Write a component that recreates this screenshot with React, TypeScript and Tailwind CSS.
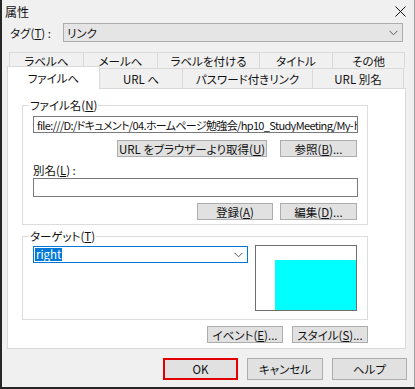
import React from "react";

function Key({ k }: { k: string }) {
  return (
    <>
      (<u>{k}</u>)
    </>
  );
}

function Button({ className = "", children }: { className?: string; children: React.ReactNode }) {
  return (
    <div
      className={`flex shrink-0 items-center justify-center border border-[#adadad] bg-[#e1e1e1] whitespace-nowrap ${className}`}
    >
      {children}
    </div>
  );
}

function Chevron() {
  return (
    <svg width="9" height="6" viewBox="0 0 9 6" className="shrink-0">
      <polyline points="0.5,0.8 4.5,4.8 8.5,0.8" fill="none" stroke="#5a5a5a" strokeWidth="1" />
    </svg>
  );
}

function GroupBox({
  label,
  className = "",
  children,
}: {
  label: React.ReactNode;
  className?: string;
  children: React.ReactNode;
}) {
  return (
    <div className={`relative ml-[14px] w-[346px] border border-[#dcdcdc] ${className}`}>
      <span className="absolute left-[6px] top-[-9px] bg-white px-[1px] leading-[16px]">{label}</span>
      {children}
    </div>
  );
}

const TOP_TABS = [
  { label: "ラベルへ", w: "w-[74px]" },
  { label: "メールへ", w: "w-[74px]" },
  { label: "ラベルを付ける", w: "w-[102px]" },
  { label: "タイトル", w: "w-[73px]" },
  { label: "その他", w: "w-[73px] border-r" },
];

const BOTTOM_TABS = [
  { label: "URL へ", w: "w-[82px]" },
  { label: "パスワード付きリンク", w: "w-[130px] border-l" },
  { label: "URL 別名", w: "w-[92px] border-l border-r" },
];

export default function App() {
  return (
    <div className="h-[389px] w-[415px] overflow-hidden border-b-2 border-l-2 border-r border-b-[#262626] border-l-[#262626] border-r-[#a0a0a0] bg-[#f0f0f0] font-['Noto_Sans_CJK_JP',sans-serif] text-[11.5px] leading-[16px] text-[#111] [font-feature-settings:'palt']">
      {/* title bar */}
      <div className="flex h-[23px] items-center justify-between pl-[3px] pr-[8px]">
        <span className="text-[12px]">属性</span>
        <svg width="11" height="11" viewBox="0 0 11 11">
          <path d="M0.5 0.5 L10.5 10.5 M10.5 0.5 L0.5 10.5" stroke="#111" strokeWidth="1" />
        </svg>
      </div>

      {/* tag row */}
      <div className="flex h-[19px] items-center pl-[8px]">
        <div className="w-[53px] shrink-0">
          タグ<Key k="T" /> :
        </div>
        <div className="flex h-[19px] w-[340px] items-center justify-between border border-[#adadad] bg-[#e5e5e5] pl-[3px] pr-[4px]">
          <span>リンク</span>
          <Chevron />
        </div>
      </div>

      {/* tabs */}
      <div className="ml-[7px] mt-[10px] flex h-[16px]">
        {TOP_TABS.map((t) => (
          <div
            key={t.label}
            className={`flex h-[16px] items-center justify-center border-l border-t border-[#d9d9d9] ${t.w}`}
          >
            {t.label}
          </div>
        ))}
      </div>
      <div className="ml-[5px] flex h-[20px] items-end">
        <div className="relative z-10 mb-[-1px] flex h-[23px] w-[93px] shrink-0 items-start justify-center border-l border-r border-t border-[#d9d9d9] bg-white pt-[3px]">
          ファイルへ
        </div>
        {BOTTOM_TABS.map((t) => (
          <div
            key={t.label}
            className={`flex h-[20px] shrink-0 items-center justify-center border-t border-[#d9d9d9] ${t.w}`}
          >
            {t.label}
          </div>
        ))}
      </div>

      {/* panel */}
      <div className="ml-[5px] flex h-[261px] w-[399px] flex-col border border-[#d9d9d9] bg-white">
        <GroupBox label={<>ファイル名<Key k="N" /></>} className="mt-[16px] h-[120px]">
          <div className="ml-[10px] mt-[10px] flex h-[17px] w-[325px] items-center overflow-hidden whitespace-nowrap border border-[#7a7a7a] pl-[3px] text-[11px] tracking-[-0.65px]">
            file:///D:/ドキュメント/04.ホームページ勉強会/hp10_StudyMeeting/My-ト
          </div>
          <div className="mt-[7px] flex justify-end gap-[13px] pr-[10px]">
            <Button className="h-[17px] w-[150px]">
              URL をブラウザーより取得<Key k="U" />
            </Button>
            <Button className="h-[17px] w-[77px]">
              参照<Key k="B" />...
            </Button>
          </div>
          <div className="ml-[10px] mt-[6px] h-[15px] leading-[15px]">
            別名<Key k="L" /> :
          </div>
          <div className="ml-[10px] h-[19px] w-[325px] border border-[#7a7a7a]" />
          <div className="mt-[6px] flex justify-end gap-[7px] pr-[10px]">
            <Button className="h-[17px] w-[76px]">
              登録<Key k="A" />
            </Button>
            <Button className="h-[17px] w-[77px]">
              編集<Key k="D" />...
            </Button>
          </div>
        </GroupBox>

        <GroupBox label={<>ターゲット<Key k="T" /></>} className="mt-[11px] h-[84px]">
          <div className="flex items-start pl-[10px]">
            <div className="mt-[9px] flex h-[17px] w-[215px] items-center justify-between border border-[#0078d7] pl-[1px] pr-[4px]">
              <span className="bg-[#0078d7] px-[1px] leading-[13px] text-white">right</span>
              <Chevron />
            </div>
            <div className="ml-[7px] mt-[8px] flex h-[66px] w-[102px] border border-[#6e6e6e] pl-[19px] pt-[14px]">
              <div className="h-full flex-1 bg-[#00ffff]" />
            </div>
          </div>
        </GroupBox>

        <div className="mt-[6px] flex justify-end gap-[9px] pr-[37px]">
          <Button className="h-[17px] w-[76px]">
            イベント<Key k="E" />...
          </Button>
          <Button className="h-[17px] w-[76px]">
            スタイル<Key k="S" />...
          </Button>
        </div>
      </div>

      {/* dialog buttons */}
      <div className="mt-[9px] flex justify-end gap-[9px] pr-[7px]">
        <Button className="h-[22px] w-[75px] border-2 border-[#e00000]">OK</Button>
        <Button className="h-[22px] w-[76px]">キャンセル</Button>
        <Button className="h-[22px] w-[75px]">ヘルプ</Button>
      </div>
    </div>
  );
}
